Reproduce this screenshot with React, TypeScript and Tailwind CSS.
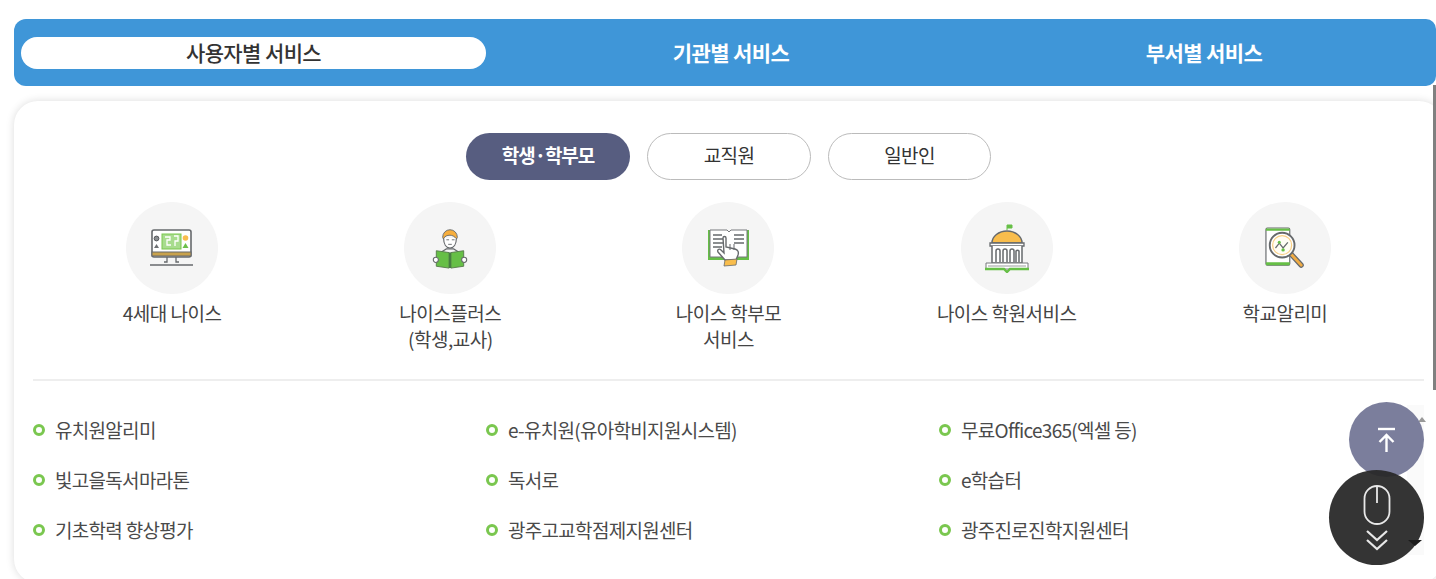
const font = "font-['Noto_Sans_CJK_KR','Noto_Sans',sans-serif]";

const tabs = [
  { label: "사용자별 서비스", className: "w-[465px] bg-white text-[#333] font-medium" },
  { label: "기관별 서비스", className: "w-[470px] text-white font-bold" },
  { label: "부서별 서비스", className: "w-[456px] text-white font-bold" },
];
const filters = [
  { label: "학생·학부모", className: "w-[164px] bg-[#575d80] font-bold tracking-[-1px] text-white" },
  { label: "교직원", className: "w-[164px] border border-[#bbb] tracking-[-0.6px] text-[#333]" },
  { label: "일반인", className: "w-[163px] border border-[#bbb] tracking-[-0.6px] text-[#333]" },
];

const links = [
  "유치원알리미",
  "e-유치원(유아학비지원시스템)",
  "무료Office365(엑셀 등)",
  "빛고을독서마라톤",
  "독서로",
  "e학습터",
  "기초학력 향상평가",
  "광주고교학점제지원센터",
  "광주진로진학지원센터",
];

function MonitorIcon() {
  return (
    <svg width="44" height="38" viewBox="0 0 44 38" fill="none">
      <rect x="2" y="1" width="39" height="27" rx="2" fill="#fff" stroke="#66696c" strokeWidth="1.6" />
      <rect x="2" y="23" width="39" height="4" fill="#c9a24c" stroke="#66696c" strokeWidth="1" />
      <rect x="12" y="5" width="19" height="15" fill="#a8dc8e" stroke="#7ac74f" strokeWidth="1" />
      <path d="M15 8h5v3h-3v5h4M24 7h4v5h-3v5" stroke="#fff" strokeWidth="1.3" />
      <circle cx="6.5" cy="9.5" r="2.4" fill="#8a8d90" stroke="#55585b" strokeWidth="1" />
      <path d="M4 19l2.5-4 2.5 4z" fill="#6d7073" />
      <circle cx="35.5" cy="9" r="2.8" fill="#f9bd4c" />
      <path d="M32.5 19l3-5 3 5z" fill="#6cc04a" />
      <path d="M17 28v5h-3M26 28v5h3" stroke="#66696c" strokeWidth="1.3" />
      <path d="M0 36h43" stroke="#66696c" strokeWidth="1.5" />
    </svg>
  );
}

function ReaderIcon() {
  return (
    <svg width="36" height="42" viewBox="0 0 38 46" fill="none">
      <path d="M11 11a8 8 0 0 1 16 0c0 1-.5 2-1 2-2-3-5-4-7-4-3 0-6 1-7 4-.5 0-1-1-1-2z" fill="#f7ae3c" stroke="#66696c" strokeWidth="1" />
      <path d="M12 12c0 7 3 11 7 11s7-4 7-11" fill="#fff" stroke="#66696c" strokeWidth="1.3" />
      <path d="M15 14h3M21 14h3M17 19h4" stroke="#66696c" strokeWidth="1" />
      <path d="M10 27l5-3h8l5 3" stroke="#66696c" strokeWidth="1.3" />
      <path d="M4 26l14 2v17L4 43zM34 26l-14 2v17l14-2z" fill="#66bf46" stroke="#55794a" strokeWidth="1" />
      <path d="M19 28v17" stroke="#3f7a3a" strokeWidth="2" />
      <circle cx="3.5" cy="36" r="2.8" fill="#fff" stroke="#66696c" strokeWidth="1.2" />
      <circle cx="34.5" cy="36" r="2.8" fill="#fff" stroke="#66696c" strokeWidth="1.2" />
    </svg>
  );
}

function BookHandIcon() {
  return (
    <svg width="41" height="38" viewBox="0 0 41 38" fill="none">
      <path d="M0 1h19l2 2 2-2h18v30H0z" fill="#66bf46" />
      <path d="M2 1h17l2 2 2-2h16v27H2z" fill="#fff" stroke="#77797c" strokeWidth="1" />
      <path d="M5 6h9M5 10h11M5 14h10M5 18h9M26 6h10M26 10h10M26 14h10" stroke="#66696c" strokeWidth="1.5" />
      <path d="M15 9c0-2 3-2 3 0v9l9 2c3 1 4 3 3 6l-2 5H17l-7-8c-1-2 1-4 3-2l3 3z" fill="#fff" stroke="#66696c" strokeWidth="1.4" />
      <path d="M22 15v6M26 15v6" stroke="#66696c" strokeWidth="1" />
      <path d="M17 31l12-1-1 6-12 1z" fill="#f9bd4c" stroke="#66696c" strokeWidth="0.8" />
    </svg>
  );
}

function AcademyIcon() {
  return (
    <svg width="44" height="49" viewBox="0 0 44 49" fill="none">
      <path d="M22 6V1h5v3h-5" fill="#66bf46" stroke="#66bf46" strokeWidth="1" />
      <path d="M7 19a15 12 0 0 1 30 0z" fill="#f9bd4c" stroke="#66696c" strokeWidth="1.5" />
      <path d="M5 19h34v3H5z" fill="#fff" stroke="#66696c" strokeWidth="1.3" />
      <path d="M7 22v17h30V22" fill="#fff" stroke="#66696c" strokeWidth="1.5" />
      <path d="M11 38V27a2 2 0 0 1 4 0v11M18 38V27a2 2 0 0 1 4 0v11M25 38V27a2 2 0 0 1 4 0v11M31 38V27a2 2 0 0 1 3 0v11" stroke="#66696c" strokeWidth="1.5" />
      <path d="M1 39h42v6H1z" fill="#fff" stroke="#77797c" strokeWidth="1" />
      <path d="M3 42h38" stroke="#9a9c9e" strokeWidth="1" />
      <path d="M0 45h19l3 3 3-3h19" stroke="#66bf46" strokeWidth="2.4" />
    </svg>
  );
}

function ReportIcon() {
  return (
    <svg width="40" height="42" viewBox="0 0 42 44" fill="none">
      <rect x="1" y="1" width="25" height="39" rx="1.5" fill="#fff" stroke="#66696c" strokeWidth="1.2" />
      <path d="M1 1.5h25V4H1zM1 37h25v3H1z" fill="#66bf46" />
      <path d="M27 28l11 12" stroke="#66696c" strokeWidth="5.5" strokeLinecap="round" />
      <path d="M27 28l11 12" stroke="#f0ac45" strokeWidth="3" strokeLinecap="round" />
      <circle cx="18" cy="19" r="13" fill="#fff" stroke="#66696c" strokeWidth="2" />
      <circle cx="18" cy="19" r="10" fill="#fffdf5" stroke="#f9cf85" strokeWidth="1.3" />
      <path d="M11 22l4-5 4 5 5-6" stroke="#66696c" strokeWidth="1.3" />
      <circle cx="15" cy="16" r="1.6" fill="#66bf46" />
      <circle cx="19" cy="24" r="1.8" fill="#66bf46" />
    </svg>
  );
}

const services = [
  { icon: MonitorIcon, label: ["4세대 나이스"] },
  { icon: ReaderIcon, label: ["나이스플러스", "(학생,교사)"] },
  { icon: BookHandIcon, label: ["나이스 학부모", "서비스"] },
  { icon: AcademyIcon, label: ["나이스 학원서비스"] },
  { icon: ReportIcon, label: ["학교알리미"] },
];

export default function App() {
  return (
    <div className={`${font} relative h-[579px] w-[1436px] overflow-hidden bg-white pl-[14px] pt-[19px]`}>
      {/* Tab bar */}
      <div className="flex h-[67px] items-center gap-[10px] rounded-l-[12px] rounded-r-[10px] bg-[#3f96d8] pl-[7px]">
        {tabs.map((tab) => (
          <div
            key={tab.label}
            className={`flex h-[32px] shrink-0 items-center justify-center rounded-[16px] text-[21px] tracking-[-0.6px] ${tab.className}`}
          >
            {tab.label}
          </div>
        ))}
      </div>

      {/* Service card */}
      <div className="mt-[15px] h-[482px] w-[1429px] rounded-[24px] bg-white px-[19px] pt-[32px] shadow-[0_0_8px_rgba(0,0,0,0.14)]">
        <div className="flex justify-center gap-[17px]">
          {filters.map((filter) => (
            <div
              key={filter.label}
              className={`flex h-[47px] items-center justify-center rounded-[24px] pb-[2px] text-[19px] ${filter.className}`}
            >
              {filter.label}
            </div>
          ))}
        </div>

        <div className="mt-[22px] grid h-[179px] grid-cols-5 border-b-2 border-[#eeeeee]">
          {services.map((service) => (
            <div key={service.label[0]} className="flex flex-col items-center">
              <div className="flex h-[92px] w-[92px] items-center justify-center rounded-full bg-[#f5f5f5]">
                <service.icon />
              </div>
              <div className="mt-[6px] text-center text-[19px] leading-[26px] tracking-[-0.5px] text-[#444]">
                {service.label.map((line) => (
                  <div key={line}>{line}</div>
                ))}
              </div>
            </div>
          ))}
        </div>

        <div className="mt-[34px] grid grid-cols-[453px_453px_453px] gap-y-[20px]">
          {links.map((link) => (
            <div key={link} className="flex h-[30px] items-center gap-[10px] text-[19px] tracking-[-0.7px] text-[#4a4a4a]">
              <span className="h-[12px] w-[12px] rounded-full border-[3px] border-[#7ac74f]" />
              <span>{link}</span>
            </div>
          ))}
        </div>
      </div>

      {/* Scrollbar */}
      <div className="absolute right-0 top-[85px] h-[305px] w-[3px] bg-[#808080]" />

      {/* Inner list scrollbar, mostly behind the floating buttons */}
      <div className="absolute left-[1407px] top-[405px] flex h-[150px] w-[17px] flex-col items-center justify-between bg-[#fafafa] py-[12px]">
        <span className="ml-[12px] h-0 w-0 border-x-[4px] border-b-[5px] border-x-transparent border-b-[#999]" />
      </div>

      {/* Floating buttons */}
      <div className="absolute left-[1349px] top-[402px] flex h-[75px] w-[75px] items-center justify-center rounded-full bg-[#7b7e9c]">
        <svg width="22" height="26" viewBox="0 0 22 26" fill="none" stroke="#fff" strokeWidth="2.4">
          <path d="M2 2h17" />
          <path d="M10.5 25V9M3.5 15l7-7 7 7" />
        </svg>
      </div>
      <div className="absolute left-[1329px] top-[470px] flex h-[95px] w-[95px] flex-col items-center rounded-full bg-[#292929]/95 pt-[15px]">
        <svg width="28" height="40" viewBox="0 0 28 40" fill="none" stroke="#e8e8e8" strokeWidth="1.8">
          <rect x="1.5" y="1" width="25" height="38" rx="12.5" />
          <path d="M14 1v17" />
        </svg>
        <svg className="mt-[4px]" width="24" height="22" viewBox="0 0 24 22" fill="none" stroke="#e8e8e8" strokeWidth="2.2">
          <path d="M2 2l10 9 10-9M2 11l10 9 10-9" />
        </svg>
        <span className="absolute left-[79px] top-[70px] h-0 w-0 border-x-[7px] border-t-[6px] border-x-transparent border-t-[#1c1c1c]" />
      </div>
    </div>
  );
}
